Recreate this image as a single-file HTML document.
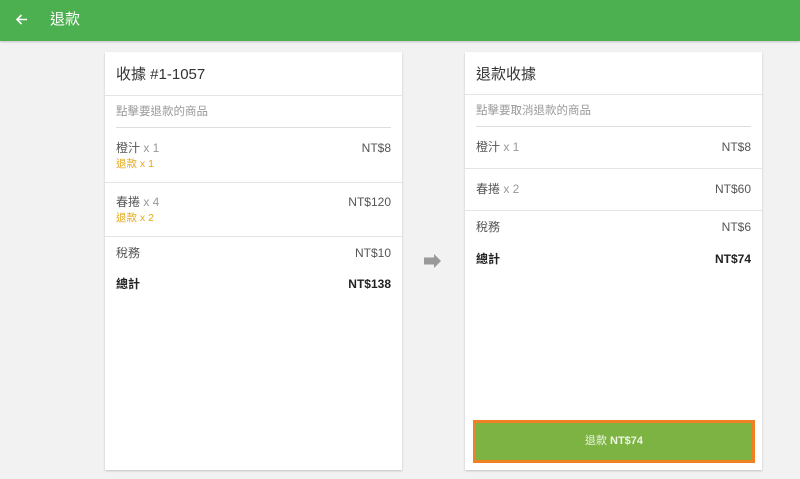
<!DOCTYPE html>
<html><head><meta charset="utf-8"><style>
*{margin:0;padding:0;box-sizing:border-box}
body{width:800px;height:479px;background:#f2f2f2;font-family:"Liberation Sans","Noto Sans CJK TC",sans-serif;position:relative;overflow:hidden;color:#555}
.hdr{position:absolute;left:0;top:0;width:800px;height:41px;background:#4caf50;box-shadow:0 1px 2px rgba(0,0,0,.2)}
.hdr .t{position:absolute;left:50px;top:11px;font-size:15px;color:#fff;line-height:18px}
.card{position:absolute;top:52px;width:297px;height:418px;background:#fff;box-shadow:0 1px 2px rgba(0,0,0,.2)}
.a{position:absolute;line-height:16px;font-size:12px}
.l{left:11px}.r{right:11px}
.hl{position:absolute;left:0;right:0;height:1px;background:#e4e4e4}
.ul{position:absolute;left:11px;right:11px;height:1px;background:#ddd}
.g{color:#999}.y{color:#e6a817;font-size:10.5px}.b{font-weight:bold;color:#222}
.title{font-size:15px;color:#333;line-height:20px}
</style></head><body>
<div class="hdr">
<svg style="position:absolute;left:15px;top:13px" width="13" height="13" viewBox="0 0 13 13"><path d="M12 6.5H2M6.5 2L2 6.5 6.5 11" stroke="#fff" stroke-width="1.6" fill="none"/></svg>
<div class="t">退款</div></div>

<div class="card" style="left:105px">
<div class="a l title" style="top:13px">收據 #1-1057</div>
<div class="hl" style="top:43px"></div>
<div class="a l g" style="top:52px;font-size:11.5px">點擊要退款的商品</div>
<div class="ul" style="top:75px"></div>
<div class="a l" style="top:88px">橙汁 <span class="g">x 1</span></div><div class="a r" style="top:88px">NT$8</div>
<div class="a l y" style="top:104px">退款 x 1</div>
<div class="hl" style="top:130px"></div>
<div class="a l" style="top:142px">春捲 <span class="g">x 4</span></div><div class="a r" style="top:142px">NT$120</div>
<div class="a l y" style="top:158px">退款 x 2</div>
<div class="hl" style="top:184px"></div>
<div class="a l" style="top:193px">稅務</div><div class="a r" style="top:193px">NT$10</div>
<div class="a l b" style="top:224px">總計</div><div class="a r b" style="top:224px">NT$138</div>
</div>

<svg style="position:absolute;left:424px;top:254px" width="18" height="14" viewBox="0 0 18 14"><path d="M0 3.5H10V0L17 7 10 14V10.5H0Z" fill="#999"/></svg>

<div class="card" style="left:465px">
<div class="a l title" style="top:13px">退款收據</div>
<div class="hl" style="top:42px"></div>
<div class="a l g" style="top:51px;font-size:11.5px">點擊要取消退款的商品</div>
<div class="ul" style="top:74px"></div>
<div class="a l" style="top:87px">橙汁 <span class="g">x 1</span></div><div class="a r" style="top:87px">NT$8</div>
<div class="hl" style="top:116px"></div>
<div class="a l" style="top:129px">春捲 <span class="g">x 2</span></div><div class="a r" style="top:129px">NT$60</div>
<div class="hl" style="top:158px"></div>
<div class="a l" style="top:167px">稅務</div><div class="a r" style="top:167px">NT$6</div>
<div class="a l b" style="top:199px">總計</div><div class="a r b" style="top:199px">NT$74</div>
<div style="position:absolute;left:8px;top:368px;width:282px;height:43px;background:#7cb342;border:3px solid #f08024;color:#eef5e6;font-size:11px;text-align:center;line-height:37px">退款 <b>NT$74</b></div>
</div>
</body></html>
